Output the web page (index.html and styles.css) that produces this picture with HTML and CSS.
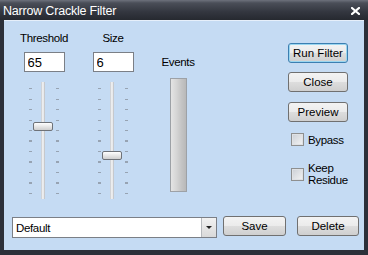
FILE: index.html
```html
<!DOCTYPE html>
<html lang="en">

<head>
    <meta charset="UTF-8">
    <meta name="viewport" content="width=device-width, initial-scale=1.0">
    <title>Narrow Crackle Filter</title>
    <link rel="stylesheet" href="styles.css">
</head>

<body>
    <div class="window">
        <!-- Title bar -->
        <div class="titlebar">
            <span class="title">Narrow Crackle Filter</span>
            <svg class="close" width="9" height="8" viewBox="0 0 9 8">
                <path d="M1 1 L8 7 M8 1 L1 7" stroke="#fff" stroke-width="2.2" stroke-linecap="square"/>
            </svg>
        </div>

        <!-- Client area -->
        <div class="client">
            <div class="top-row">
                <div class="slider-col">
                    <div class="label">Threshold</div>
                    <input class="num" type="text" value="65">
                    <div class="slider">
                        <div class="ticks"></div>
                        <div class="rail">
                            <div class="track"></div>
                            <div class="thumb" style="top: 40px"></div>
                        </div>
                        <div class="ticks"></div>
                    </div>
                </div>

                <div class="slider-col size-col">
                    <div class="label">Size</div>
                    <input class="num" type="text" value="6">
                    <div class="slider">
                        <div class="ticks"></div>
                        <div class="rail">
                            <div class="track"></div>
                            <div class="thumb" style="top: 69px"></div>
                        </div>
                        <div class="ticks"></div>
                    </div>
                </div>

                <div class="events-col">
                    <div class="label">Events</div>
                    <div class="meter"></div>
                </div>

                <div class="actions">
                    <button class="btn default">Run Filter</button>
                    <button class="btn">Close</button>
                    <button class="btn">Preview</button>
                    <label class="check bypass"><span class="box"></span>Bypass</label>
                    <label class="check keep"><span class="box"></span><span>Keep<br>Residue</span></label>
                </div>
            </div>

            <!-- Preset row -->
            <div class="bottom-row">
                <div class="combo">
                    <span class="combo-text">Default</span>
                    <span class="combo-arrow"></span>
                </div>
                <button class="btn save">Save</button>
                <button class="btn delete">Delete</button>
            </div>
        </div>
    </div>
</body>

</html>
```

FILE: styles.css
```css
/* Basic page */
body {
    margin: 0;
    font-family: "Liberation Sans", Arial, sans-serif;
    font-size: 11.5px;
    letter-spacing: -0.35px;
    color: #000;
}

/* Window frame */
.window {
    width: 368px;
    height: 255px;
    box-sizing: border-box;
    background: #2c3039;
    padding: 0 4px 5px 4px;
    display: flex;
    flex-direction: column;
}

.titlebar {
    height: 20px;
    margin: 0 -4px;
    padding: 0 8px 0 3px;
    display: flex;
    align-items: center;
    justify-content: space-between;
    background: linear-gradient(#6d717c 0, #4a4e58 3px, #33363f 12px, #262930 20px);
}

.title {
    color: #fff;
    font-size: 12.5px;
    letter-spacing: -0.2px;
    padding-top: 1px;
}

.close {
    margin-top: 1px;
}

.client {
    flex: 1;
    background: #c5dbf3;
    border-top: 1px solid #e6effa;
    display: flex;
    flex-direction: column;
}

/* Top area with sliders, meter and buttons */
.top-row {
    display: flex;
    padding-left: 16px;
}

.label {
    line-height: 14px;
    white-space: nowrap;
}

.slider-col {
    width: 48px;
    padding-top: 10px;
    display: flex;
    flex-direction: column;
    align-items: center;
}

.size-col {
    margin-left: 21px;
}

.num {
    width: 41px;
    height: 20px;
    box-sizing: border-box;
    margin-top: 7px;
    border: 1px solid #7b7f86;
    background: #fff;
    padding: 0 3px;
    font: inherit;
    font-size: 13px;
    letter-spacing: 0;
    outline: none;
}

.slider {
    margin-top: 10px;
    height: 117px;
    display: flex;
}

.ticks {
    width: 3px;
    margin-top: 6px;
    height: 106px;
    background: repeating-linear-gradient(to bottom, #97a3b2 0, #97a3b2 1px, transparent 1px, transparent 10.5px);
}

.rail {
    position: relative;
    width: 20px;
    margin: 0 3px 0 1px;
    display: flex;
    justify-content: center;
}

.track {
    width: 4px;
    background: linear-gradient(to right, #c2c6cc, #fafafa 50%, #b4b8be);
}

.thumb {
    position: absolute;
    left: 0;
    width: 20px;
    height: 9px;
    box-sizing: border-box;
    border: 1px solid #6e7278;
    border-radius: 2px;
    background: linear-gradient(#ffffff, #e2e2e2 60%, #cfcfcf);
}

/* Events meter */
.events-col {
    width: 40px;
    margin-left: 21px;
    padding-top: 34px;
    display: flex;
    flex-direction: column;
    align-items: center;
}

.meter {
    width: 17px;
    height: 114px;
    box-sizing: border-box;
    margin-top: 9px;
    border: 1px solid #9da1a6;
    background: linear-gradient(to right, #e4e4e4, #d6d6d6 35%, #c4c4c4 70%, #b8b8b8);
}

/* Buttons and checkboxes */
.actions {
    margin-left: 90px;
    width: 60px;
    padding-top: 22px;
    display: flex;
    flex-direction: column;
}

.btn {
    width: 60px;
    height: 20px;
    box-sizing: border-box;
    margin: 0 0 10px 0;
    padding: 0;
    border: 1px solid #707070;
    border-radius: 3px;
    background: linear-gradient(#f3f3f3, #ebebeb 50%, #dddddd 51%, #cfcfcf);
    font: inherit;
    color: #000;
}

.btn.default {
    border-color: #3c7fb1;
    box-shadow: inset 0 0 0 1px #9ad6f0;
    margin-bottom: 9px;
}

.check {
    display: flex;
    align-items: center;
    line-height: 12px;
    margin-left: 3px;
}

.check .box {
    width: 13px;
    height: 13px;
    box-sizing: border-box;
    margin-right: 4px;
    border: 1px solid #8e8f8f;
    background: linear-gradient(135deg, #cbcfd5, #f4f4f4);
    box-shadow: inset 0 0 0 1px #dfe1e4;
}

.bypass {
    margin-top: 1px;
}

.keep {
    margin-top: 16px;
}

/* Preset row */
.bottom-row {
    margin-top: auto;
    padding: 0 0 12px 8px;
    display: flex;
    align-items: flex-start;
}

.combo {
    width: 205px;
    height: 21px;
    box-sizing: border-box;
    margin-top: 1px;
    border: 1px solid #7b7f86;
    background: #fff;
    display: flex;
    align-items: center;
}

.combo-text {
    flex: 1;
    padding-left: 3px;
}

.combo-arrow {
    width: 15px;
    height: 19px;
    box-sizing: border-box;
    border-left: 1px solid #b6b9bd;
    background: linear-gradient(#f2f2f2, #d9d9d9);
    position: relative;
}

.combo-arrow::after {
    content: "";
    position: absolute;
    left: 4px;
    top: 8px;
    border-left: 3px solid transparent;
    border-right: 3px solid transparent;
    border-top: 3px solid #222;
}

.save {
    width: 63px;
    margin: 0 0 0 6px;
}

.delete {
    width: 62px;
    margin: 0 0 0 11px;
}
```
